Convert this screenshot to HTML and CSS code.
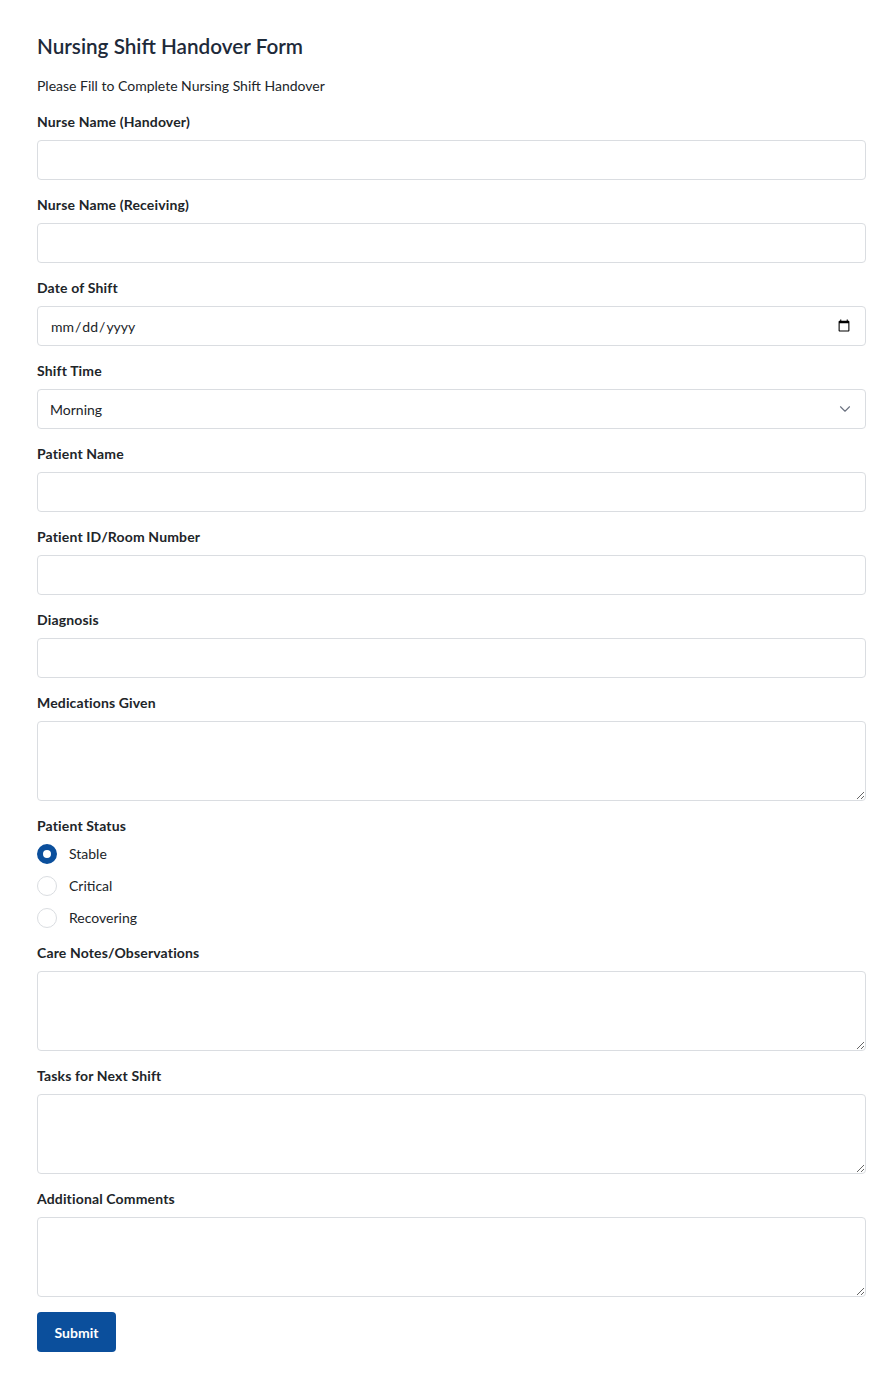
FILE: index.html
```html
<!DOCTYPE html>
<html lang="en">
<head>
<meta charset="utf-8">
<title>Nursing Shift Handover Form</title>
<link rel="stylesheet" href="styles.css">
</head>
<body>
<main class="container">
  <h1 class="title">Nursing Shift Handover Form</h1>
  <p class="subtitle">Please Fill to Complete Nursing Shift Handover</p>
  <form class="form">
    <div class="field">
      <label class="label" for="nh">Nurse Name (Handover)</label>
      <input class="control" id="nh" type="text">
    </div>
    <div class="field">
      <label class="label" for="nr">Nurse Name (Receiving)</label>
      <input class="control" id="nr" type="text">
    </div>
    <div class="field">
      <label class="label" for="ds">Date of Shift</label>
      <input class="control date" id="ds" type="date">
    </div>
    <div class="field">
      <label class="label" for="st">Shift Time</label>
      <div class="select-wrap">
        <select class="control select" id="st">
          <option>Morning</option>
          <option>Afternoon</option>
          <option>Night</option>
        </select>
        <svg class="chev" width="12" height="12" viewBox="0 0 16 16" aria-hidden="true"><path d="M2 5l6 6 6-6" fill="none" stroke="#6b7280" stroke-width="1.5" stroke-linecap="round" stroke-linejoin="round"/></svg>
      </div>
    </div>
    <div class="field">
      <label class="label" for="pn">Patient Name</label>
      <input class="control" id="pn" type="text">
    </div>
    <div class="field">
      <label class="label" for="pid">Patient ID/Room Number</label>
      <input class="control" id="pid" type="text">
    </div>
    <div class="field">
      <label class="label" for="dg">Diagnosis</label>
      <input class="control" id="dg" type="text">
    </div>
    <div class="field">
      <label class="label" for="mg">Medications Given</label>
      <textarea class="control area" id="mg"></textarea>
    </div>
    <div class="field">
      <span class="label">Patient Status</span>
      <div class="radios">
        <label class="radio"><input type="radio" name="ps" checked><span class="dot"></span>Stable</label>
        <label class="radio"><input type="radio" name="ps"><span class="dot"></span>Critical</label>
        <label class="radio"><input type="radio" name="ps"><span class="dot"></span>Recovering</label>
      </div>
    </div>
    <div class="field">
      <label class="label" for="cn">Care Notes/Observations</label>
      <textarea class="control area" id="cn"></textarea>
    </div>
    <div class="field">
      <label class="label" for="tn">Tasks for Next Shift</label>
      <textarea class="control area" id="tn"></textarea>
    </div>
    <div class="field">
      <label class="label" for="ac">Additional Comments</label>
      <textarea class="control area" id="ac"></textarea>
    </div>
    <button class="submit" type="submit">Submit</button>
  </form>
</main>
</body>
</html>
```
FILE: styles.css
```css
* { box-sizing: border-box; }
html, body { margin: 0; padding: 0; background: #fff; }
body {
  font-family: "Lato", "Open Sans", sans-serif;
  font-size: 14px;
  color: #212529;
}
.container {
  width: 866px;
  padding: 32px 0 0 37px;
}
.title {
  margin: 0;
  font-size: 20.7px;
  line-height: 28px;
  font-weight: 600;
  color: #1e2a3a;
}
.subtitle {
  margin: 16px 0 16px;
  line-height: 20px;
  font-size: 14px;
}
.form { display: flex; flex-direction: column; }
.field { display: flex; flex-direction: column; margin-bottom: 15px; }
.label {
  display: block;
  font-weight: 700;
  line-height: 20px;
  margin-bottom: 8px;
  letter-spacing: 0.15px;
  color: #212529;
}
.control {
  display: block;
  width: 100%;
  height: 40px;
  padding: 0 12px;
  border: 1px solid #dadde1;
  border-radius: 4px;
  font-family: inherit;
  font-size: 14px;
  color: #212529;
  background: #fff;
  outline: none;
}
.date { padding-right: 12px; }
.select-wrap { position: relative; }
.select { appearance: none; -webkit-appearance: none; }
.chev { position: absolute; right: 15px; top: 14px; pointer-events: none; }
.area { height: 80px; padding: 8px 12px; resize: vertical; }
.radios { display: flex; flex-direction: column; gap: 12px; }
.radio {
  display: flex;
  align-items: center;
  gap: 12px;
  line-height: 20px;
  cursor: pointer;
}
.radio input { position: absolute; opacity: 0; width: 0; height: 0; margin: 0; }
.dot {
  width: 20px;
  height: 20px;
  border-radius: 50%;
  border: 1px solid #dadde1;
  background: #fff;
  flex: none;
}
.radio input:checked + .dot {
  border: 6px solid #0b4f9c;
  background: #fff;
}
.submit {
  align-self: flex-start;
  width: 79px;
  height: 40px;
  border: none;
  border-radius: 4px;
  background: #0b4f9c;
  color: #fff;
  font-family: inherit;
  font-size: 14px;
  font-weight: 700;
  cursor: pointer;
}
```
